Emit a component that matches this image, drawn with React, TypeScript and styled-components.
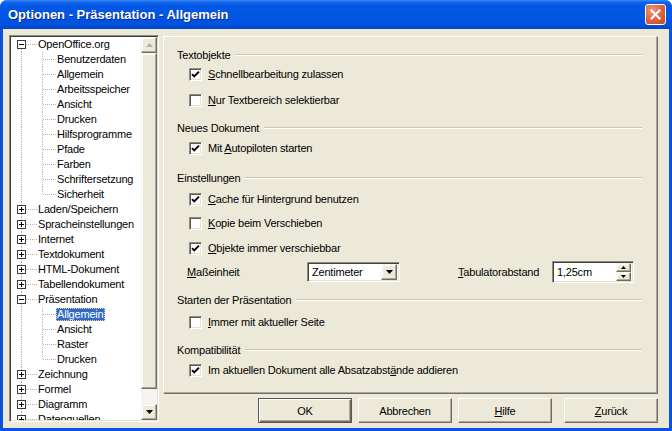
import React from 'react';
import styled, { createGlobalStyle, css } from 'styled-components';

const Global = createGlobalStyle`
  html, body { margin: 0; padding: 0; background: #ffffff; }
  body { font-family: "Liberation Sans", Arial, sans-serif; font-size: 11px; letter-spacing: -0.2px; color: #000; }
  #root { width: 672px; height: 431px; }
`;

const Window = styled.div`
  width: 672px;
  height: 431px;
  box-sizing: border-box;
  display: flex;
  flex-direction: column;
  background: #0853e0;
  border-radius: 7px 7px 0 0;
  overflow: hidden;
`;

const TitleBar = styled.div`
  height: 29px;
  flex: none;
  display: flex;
  align-items: center;
  padding: 0 6px 0 8px;
  background: linear-gradient(
    to bottom,
    #3d8df6 0%,
    #1466ee 7%,
    #0458e4 20%,
    #0055e5 55%,
    #0052de 85%,
    #0046c8 100%
  );
`;

const Title = styled.div`
  flex: 1;
  color: #ffffff;
  font-family: "Liberation Sans", Arial, sans-serif;
  font-weight: bold;
  font-size: 13px;
  letter-spacing: 0;
  text-shadow: 1px 1px 0 #0a2a8a;
  white-space: nowrap;
`;

const CloseButton = styled.div`
  width: 21px;
  height: 21px;
  box-sizing: border-box;
  border: 1px solid #ffffff;
  border-radius: 3px;
  background: radial-gradient(circle at 35% 30%, #ee9a7d 0%, #df6a45 45%, #c8441f 100%);
  display: flex;
  align-items: center;
  justify-content: center;
`;

const Client = styled.div`
  flex: 1;
  margin: 0 3px 3px;
  background: #ece9d8;
  display: flex;
  align-items: flex-start;
  gap: 4px;
  padding: 6px 11px 5px 6px;
`;

/* ---------- tree ---------- */

const TreeBox = styled.div`
  width: 150px;
  height: 387px;
  flex: none;
  box-sizing: border-box;
  border: 1px solid;
  border-color: #8f8c7e #ffffff #ffffff #8f8c7e;
  box-shadow: inset 1px 1px 0 #404040, inset -1px -1px 0 #e4e1d4;
  background: #ffffff;
  padding: 1px;
  display: flex;
`;

const TreeList = styled.div`
  flex: 1;
  overflow: hidden;
  display: flex;
  flex-direction: column;
`;

const TreeRow = styled.div`
  height: 15px;
  flex: none;
  display: flex;
  align-items: center;
  white-space: nowrap;
`;

const GuideSvg = styled.svg`
  flex: none;
  display: block;
  shape-rendering: crispEdges;
`;

const TreeLabel = styled.span<{ $selected?: boolean }>`
  padding: 0 1px;
  line-height: 13px;
  height: 13px;
  font-size: 11px;
  color: #000;
  ${(p) =>
    p.$selected &&
    css`
      background: #316ac5;
      color: #ffffff;
      outline: 1px dotted #e8d890;
      outline-offset: -1px;
    `}
`;

const ScrollBar = styled.div`
  width: 16px;
  flex: none;
  display: flex;
  flex-direction: column;
  background: #f4f3ee;
`;

const raised = css`
  box-sizing: border-box;
  background: #ece9d8;
  border: 1px solid;
  border-color: #f6f5f0 #716f64 #716f64 #f6f5f0;
  box-shadow: inset -1px -1px 0 #aca899, inset 1px 1px 0 #ffffff;
`;

const ScrollButton = styled.div`
  ${raised};
  height: 16px;
  flex: none;
  display: flex;
  align-items: center;
  justify-content: center;
`;

const ScrollTrack = styled.div`
  flex: 1;
  display: flex;
  flex-direction: column;
`;

const Thumb = styled.div`
  ${raised};
  height: 336px;
  flex: none;
`;

/* ---------- right side ---------- */

const RightColumn = styled.div`
  width: 495px;
  flex: none;
  display: flex;
  flex-direction: column;
  gap: 5px;
`;

const Panel = styled.div`
  margin-top: 1px;
  width: 494px;
  height: 357px;
  box-sizing: border-box;
  border: 1px solid;
  border-color: #ffffff #aca899 #aca899 #ffffff;
  box-shadow: 1px 1px 0 #716f64;
  padding: 10px 14px 0 13px;
  display: flex;
  flex-direction: column;
`;

const SectionHeader = styled.div<{ $mt?: number }>`
  height: 16px;
  margin-top: ${(p) => p.$mt ?? 0}px;
  display: flex;
  align-items: center;
  gap: 5px;
  white-space: nowrap;
`;

const GrooveLine = styled.div`
  flex: 1;
  height: 0;
  border-top: 1px solid #c9c6b6;
  border-bottom: 1px solid #ffffff;
`;

const CheckRow = styled.div<{ $mt?: number }>`
  height: 16px;
  margin-top: ${(p) => p.$mt ?? 0}px;
  padding-left: 12px;
  display: flex;
  align-items: center;
  gap: 6px;
  white-space: nowrap;
`;

const Box = styled.div`
  width: 13px;
  height: 13px;
  flex: none;
  box-sizing: border-box;
  background: #ffffff;
  border: 1px solid;
  border-color: #8f8c7e #ffffff #ffffff #8f8c7e;
  box-shadow: inset 1px 1px 0 #5a5a5a, inset -1px -1px 0 #e4e1d4;
  display: flex;
  align-items: center;
  justify-content: center;
`;

const Acc = styled.span`
  text-decoration: underline;
  text-underline-offset: 1px;
`;

const SettingRow = styled.div<{ $mt?: number }>`
  height: 22px;
  margin-top: ${(p) => p.$mt ?? 0}px;
  padding-left: 10px;
  display: flex;
  align-items: center;
  white-space: nowrap;
`;

const FieldLabel = styled.div<{ $w: number; $ml?: number }>`
  width: ${(p) => p.$w}px;
  margin-left: ${(p) => p.$ml ?? 0}px;
  flex: none;
`;

const sunken = css`
  box-sizing: border-box;
  background: #ffffff;
  border: 1px solid;
  border-color: #8f8c7e #ffffff #ffffff #8f8c7e;
  box-shadow: inset 1px 1px 0 #404040, inset -1px -1px 0 #e4e1d4;
`;

const Select = styled.div`
  ${sunken};
  width: 93px;
  height: 20px;
  flex: none;
  padding: 2px;
  display: flex;
  align-items: center;
`;

const FieldValue = styled.div`
  flex: 1;
  padding-left: 2px;
`;

const DropButton = styled.div`
  ${raised};
  width: 16px;
  height: 16px;
  flex: none;
  display: flex;
  align-items: center;
  justify-content: center;
`;

const Spin = styled.div`
  ${sunken};
  width: 82px;
  height: 22px;
  flex: none;
  padding: 2px;
  display: flex;
  align-items: center;
`;

const SpinButtons = styled.div`
  width: 15px;
  height: 18px;
  flex: none;
  display: flex;
  flex-direction: column;
`;

const SpinButton = styled.div`
  ${raised};
  flex: 1;
  display: flex;
  align-items: center;
  justify-content: center;
`;

const ButtonRow = styled.div`
  height: 25px;
  display: flex;
  justify-content: flex-end;
  gap: 6px;
`;

const Button = styled.div<{ $default?: boolean; $gapBefore?: number }>`
  width: 94px;
  height: 25px;
  box-sizing: border-box;
  margin-left: ${(p) => p.$gapBefore ?? 0}px;
  background: #ece9d8;
  border: 1px solid;
  border-color: #ffffff #716f64 #716f64 #ffffff;
  box-shadow: inset -1px -1px 0 #aca899;
  display: flex;
  align-items: center;
  justify-content: center;
  font-size: 11px;
  ${(p) =>
    p.$default &&
    css`
      border-color: #5a584e;
      box-shadow: inset 1px 1px 0 #ffffff, inset -1px -1px 0 #716f64, inset -2px -2px 0 #aca899;
    `}
`;

/* ---------- data ---------- */

type Node = {
  label: string;
  level: 0 | 1;
  exp?: 'open' | 'closed';
  last?: boolean;
  selected?: boolean;
};

const nodes: Node[] = [
  { label: 'OpenOffice.org', level: 0, exp: 'open' },
  { label: 'Benutzerdaten', level: 1 },
  { label: 'Allgemein', level: 1 },
  { label: 'Arbeitsspeicher', level: 1 },
  { label: 'Ansicht', level: 1 },
  { label: 'Drucken', level: 1 },
  { label: 'Hilfsprogramme', level: 1 },
  { label: 'Pfade', level: 1 },
  { label: 'Farben', level: 1 },
  { label: 'Schriftersetzung', level: 1 },
  { label: 'Sicherheit', level: 1, last: true },
  { label: 'Laden/Speichern', level: 0, exp: 'closed' },
  { label: 'Spracheinstellungen', level: 0, exp: 'closed' },
  { label: 'Internet', level: 0, exp: 'closed' },
  { label: 'Textdokument', level: 0, exp: 'closed' },
  { label: 'HTML-Dokument', level: 0, exp: 'closed' },
  { label: 'Tabellendokument', level: 0, exp: 'closed' },
  { label: 'Präsentation', level: 0, exp: 'open' },
  { label: 'Allgemein', level: 1, selected: true },
  { label: 'Ansicht', level: 1 },
  { label: 'Raster', level: 1 },
  { label: 'Drucken', level: 1, last: true },
  { label: 'Zeichnung', level: 0, exp: 'closed' },
  { label: 'Formel', level: 0, exp: 'closed' },
  { label: 'Diagramm', level: 0, exp: 'closed' },
  { label: 'Datenquellen', level: 0, exp: 'closed' },
];

const DOT = '#bcb6a0';

function Guide({ node, first }: { node: Node; first: boolean }) {
  if (node.level === 0) {
    return (
      <GuideSvg width={26} height={15}>
        <line x1="10.5" y1={first ? 8 : 0} x2="10.5" y2="15" stroke={DOT} strokeDasharray="1 1" />
        <line x1="15" y1="7.5" x2="26" y2="7.5" stroke={DOT} strokeDasharray="1 1" />
        <rect x="6.5" y="3.5" width="8" height="8" fill="#fff" stroke="#3a3a3a" />
        <line x1="8" y1="7.5" x2="13" y2="7.5" stroke="#000" />
        {node.exp === 'closed' && <line x1="10.5" y1="5" x2="10.5" y2="10" stroke="#000" />}
      </GuideSvg>
    );
  }
  return (
    <GuideSvg width={45} height={15}>
      <line x1="10.5" y1="0" x2="10.5" y2="15" stroke={DOT} strokeDasharray="1 1" />
      <line x1="31.5" y1="0" x2="31.5" y2={node.last ? 8 : 15} stroke={DOT} strokeDasharray="1 1" />
      <line x1="32" y1="7.5" x2="45" y2="7.5" stroke={DOT} strokeDasharray="1 1" />
    </GuideSvg>
  );
}

function Check({ checked }: { checked?: boolean }) {
  return (
    <Box>
      {checked && (
        <svg width="9" height="9" viewBox="0 0 9 9">
          <path d="M1 4.2 L3.2 6.5 L8 1.6" fill="none" stroke="#000" strokeWidth="1.9" />
        </svg>
      )}
    </Box>
  );
}

function Arrow({ dir, color, w = 7 }: { dir: 'up' | 'down'; color: string; w?: number }) {
  const h = Math.ceil(w / 2);
  return (
    <svg width={w} height={h} viewBox={`0 0 ${w} ${h}`} style={{ display: 'block' }}>
      {dir === 'down' ? (
        <polygon points={`0,0 ${w},0 ${w / 2},${h}`} fill={color} />
      ) : (
        <polygon points={`0,${h} ${w},${h} ${w / 2},0`} fill={color} />
      )}
    </svg>
  );
}

export default function App() {
  return (
    <>
      <Global />
      <Window>
        <TitleBar>
          <Title>Optionen - Präsentation - Allgemein</Title>
          <CloseButton>
            <svg width="11" height="11" viewBox="0 0 11 11">
              <path d="M1.5 1.5 L9.5 9.5 M9.5 1.5 L1.5 9.5" stroke="#fff" strokeWidth="2" strokeLinecap="square" />
            </svg>
          </CloseButton>
        </TitleBar>
        <Client>
          <TreeBox>
            <TreeList>
              {nodes.map((n, i) => (
                <TreeRow key={i}>
                  <Guide node={n} first={i === 0} />
                  <TreeLabel $selected={n.selected}>{n.label}</TreeLabel>
                </TreeRow>
              ))}
            </TreeList>
            <ScrollBar>
              <ScrollButton>
                <Arrow dir="up" color="#b5b2a4" />
              </ScrollButton>
              <ScrollTrack>
                <Thumb />
              </ScrollTrack>
              <ScrollButton>
                <Arrow dir="down" color="#000" />
              </ScrollButton>
            </ScrollBar>
          </TreeBox>

          <RightColumn>
            <Panel>
              <SectionHeader>
                Textobjekte
                <GrooveLine />
              </SectionHeader>
              <CheckRow $mt={3}>
                <Check checked />
                <span>
                  <Acc>S</Acc>chnellbearbeitung zulassen
                </span>
              </CheckRow>
              <CheckRow $mt={10}>
                <Check />
                <span>
                  <Acc>N</Acc>ur Textbereich selektierbar
                </span>
              </CheckRow>

              <SectionHeader $mt={12}>
                Neues Dokument
                <GrooveLine />
              </SectionHeader>
              <CheckRow $mt={4}>
                <Check checked />
                <span>
                  Mit <Acc>A</Acc>utopiloten starten
                </span>
              </CheckRow>

              <SectionHeader $mt={14}>
                Einstellungen
                <GrooveLine />
              </SectionHeader>
              <CheckRow $mt={5}>
                <Check checked />
                <span>
                  <Acc>C</Acc>ache für Hintergrund benutzen
                </span>
              </CheckRow>
              <CheckRow $mt={8}>
                <Check />
                <span>
                  <Acc>K</Acc>opie beim Verschieben
                </span>
              </CheckRow>
              <CheckRow $mt={9}>
                <Check checked />
                <span>
                  <Acc>O</Acc>bjekte immer verschiebbar
                </span>
              </CheckRow>
              <SettingRow $mt={5}>
                <FieldLabel $w={120}>
                  <Acc>M</Acc>aßeinheit
                </FieldLabel>
                <Select>
                  <FieldValue>Zentimeter</FieldValue>
                  <DropButton>
                    <Arrow dir="down" color="#000" />
                  </DropButton>
                </Select>
                <FieldLabel $w={94} $ml={58}>
                  <Acc>T</Acc>abulatorabstand
                </FieldLabel>
                <Spin>
                  <FieldValue>1,25cm</FieldValue>
                  <SpinButtons>
                    <SpinButton>
                      <Arrow dir="up" color="#000" w={5} />
                    </SpinButton>
                    <SpinButton>
                      <Arrow dir="down" color="#000" w={5} />
                    </SpinButton>
                  </SpinButtons>
                </Spin>
              </SettingRow>

              <SectionHeader $mt={9}>
                Starten der Präsentation
                <GrooveLine />
              </SectionHeader>
              <CheckRow $mt={6}>
                <Check />
                <span>
                  <Acc>I</Acc>mmer mit aktueller Seite
                </span>
              </CheckRow>

              <SectionHeader $mt={12}>
                Kompatibilität
                <GrooveLine />
              </SectionHeader>
              <CheckRow $mt={4}>
                <Check checked />
                <span>
                  Im aktuellen Dokument alle Absatzabst<Acc>ä</Acc>nde addieren
                </span>
              </CheckRow>
            </Panel>

            <ButtonRow>
              <Button $default>OK</Button>
              <Button>Abbrechen</Button>
              <Button>
                <span>
                  <Acc>H</Acc>ilfe
                </span>
              </Button>
              <Button $gapBefore={6}>
                <span>
                  <Acc>Z</Acc>urück
                </span>
              </Button>
            </ButtonRow>
          </RightColumn>
        </Client>
      </Window>
    </>
  );
}
